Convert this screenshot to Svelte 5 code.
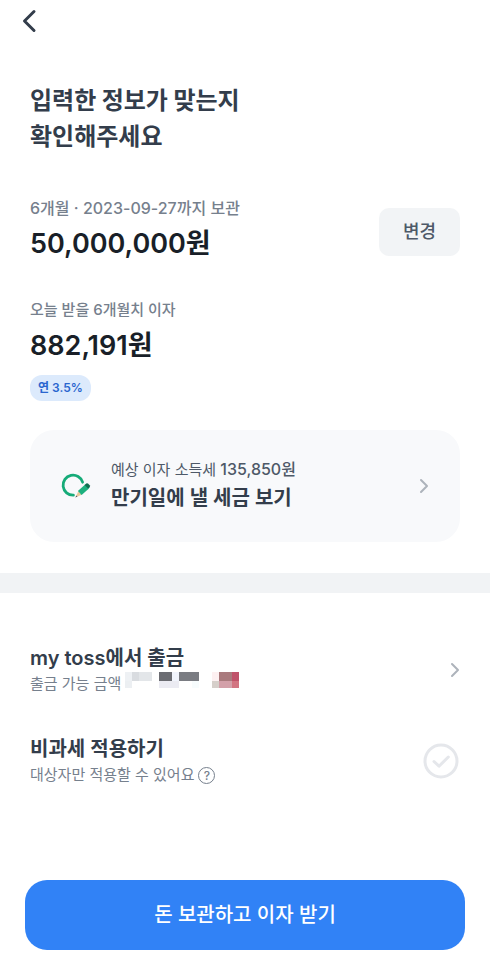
<script>
let taxFree = false;

const rate = 3.5;
const deposit = 50000000;
const interest = 882191;
const tax = 135850;

const won = (value) => value.toLocaleString('en-US') + '원';

// blurred-out balance: x, y, width, height, colour
const blocks = [
    [0, 0, 21, 27, '#eef1f4'],
    [21, 0, 21, 27, '#d9dce0'],
    [42, 0, 39, 27, '#e3e6e9'],
    [102, 0, 40, 27, '#6b6c72'],
    [142, 0, 20, 27, '#f1f4fc'],
    [162, 0, 60, 27, '#7a7c82'],
    [262, 0, 20, 27, '#fdf0f1'],
    [282, 0, 40, 27, '#a97a7d'],
    [322, 0, 20, 27, '#c0536a'],
    [0, 27, 21, 21, '#eceff2'],
    [102, 27, 60, 21, '#ebebf2'],
    [202, 27, 20, 21, '#f7fcfd'],
    [262, 27, 20, 21, '#d6cfca'],
    [282, 27, 40, 21, '#d3a0a9'],
    [322, 27, 20, 21, '#d27582']
];
</script>

<div class="page">
    <header>
        <button class="back" aria-label="뒤로">
            <svg width="16" height="24" viewBox="0 0 16 24">
                <path d="M13 2.5 3.5 12 13 21.5" />
            </svg>
        </button>
    </header>

    <main>
        <section class="summary">
            <h1>입력한 정보가 맞는지<br />확인해주세요</h1>

            <div class="amount-row">
                <div>
                    <p class="label period">6개월 · 2023-09-27까지 보관</p>
                    <p class="amount">{won(deposit)}</p>
                </div>
                <button class="change">변경</button>
            </div>

            <div class="interest">
                <p class="label">오늘 받을 6개월치 이자</p>
                <p class="amount">{won(interest)}</p>
                <span class="badge">연 {rate}%</span>
            </div>

            <a class="tax-card" href="#tax">
                <svg class="tax-icon" width="30" height="26" viewBox="0 0 30 26">
                    <path d="M12.4 22.2A10 10 0 1 1 21.6 9.2" fill="none" stroke="#16ab78" stroke-width="2.8" stroke-linecap="round" />
                    <path d="M17.2 18.4 14.4 24.4 20.6 21.7Z" fill="#e9c79b" />
                    <path d="M15.3 22.4 14.4 24.4 16.5 23.5Z" fill="#4e5968" />
                    <path d="M16.9 18 24.2 11.4 28 15.4 20.6 22Z" fill="#1db07e" />
                    <path d="M23.6 12 25.2 10.6Q26.3 9.8 27.3 10.7L28.7 12.2Q29.5 13.2 28.6 14.2L27 15.6Z" fill="#0f6e50" />
                </svg>
                <span class="tax-text">
                    <span class="tax-label">예상 이자 소득세 <b>{won(tax)}</b></span>
                    <span class="row-title tall">만기일에 낼 세금 보기</span>
                </span>
                <svg class="chevron" width="10" height="16" viewBox="0 0 10 16">
                    <path d="M2 2 8 8 2 14" />
                </svg>
            </a>
        </section>

        <section class="options">
            <a class="row" href="#account">
                <span class="row-text">
                    <span class="row-title">my toss에서 출금</span>
                    <span class="row-sub">
                        출금 가능 금액
                        <svg class="masked" width="114" height="16" viewBox="0 0 342 48" shape-rendering="crispEdges">
                            {#each blocks as [x, y, w, h, color]}
                                <rect {x} {y} width={w} height={h} fill={color} />
                            {/each}
                        </svg>
                    </span>
                </span>
                <svg class="chevron" width="10" height="16" viewBox="0 0 10 16">
                    <path d="M2 2 8 8 2 14" />
                </svg>
            </a>

            <div class="row">
                <div class="row-text">
                    <label class="row-title" for="tax-free">비과세 적용하기</label>
                    <span class="row-sub">
                        대상자만 적용할 수 있어요
                        <button class="help" aria-label="도움말">?</button>
                    </span>
                </div>
                <span class="check">
                    <input id="tax-free" type="checkbox" bind:checked={taxFree} />
                    <svg width="36" height="36" viewBox="0 0 36 36">
                        <circle cx="18" cy="18" r="16" />
                        <path d="M11 18.5 16 23.2 25.3 14" />
                    </svg>
                </span>
            </div>
        </section>
    </main>

    <footer>
        <button class="submit">돈 보관하고 이자 받기</button>
    </footer>
</div>

<style>
:global(body) {
    margin: 0;
    background: #fff;
}

.page {
    display: flex;
    flex-direction: column;
    min-height: 100vh;
    font-family: Inter, "Noto Sans CJK KR", sans-serif;
    color: #333d4b;
}

button {
    padding: 0;
    border: 0;
    background: none;
    font-family: inherit;
    cursor: pointer;
}

a {
    color: inherit;
    text-decoration: none;
}

p {
    margin: 0;
}

header {
    padding: 9px 21px;
}

.back {
    display: block;
    height: 24px;
}

.back svg {
    display: block;
}

.back path {
    fill: none;
    stroke: #333d4b;
    stroke-width: 3;
    stroke-linecap: round;
    stroke-linejoin: round;
}

.summary {
    padding: 39px 30px 31px;
    border-bottom: 20px solid #f1f3f5;
}

h1 {
    margin: 0 0 43px;
    font-family: "Noto Sans CJK KR", sans-serif;
    font-size: 24px;
    line-height: 36px;
    font-weight: 600;
}

.amount-row {
    display: flex;
    align-items: center;
    justify-content: space-between;
}

.label {
    font-size: 15px;
    line-height: 24px;
    font-weight: 500;
    color: #76808d;
}

.label.period {
    font-size: 16px;
}

.amount {
    font-size: 27px;
    line-height: 48px;
    font-weight: 600;
    color: #191f28;
}

.change {
    padding: 0 24px;
    border-radius: 10px;
    background: #f2f4f6;
    font-size: 18px;
    line-height: 48px;
    font-weight: 500;
    color: #4e5968;
}

.interest {
    margin-top: 30px;
}

.badge {
    display: block;
    width: fit-content;
    margin-top: 5px;
    padding: 0 8px;
    border-radius: 12px;
    background: #dceafc;
    font-size: 12px;
    line-height: 26px;
    font-weight: 600;
    color: #2a66cf;
}

.tax-card {
    display: flex;
    align-items: center;
    margin-top: 29px;
    padding: 28px 31px;
    border-radius: 24px;
    background: #f8f9fb;
}

.tax-text,
.row-text {
    display: flex;
    flex: 1;
    flex-direction: column;
}

.tax-text {
    margin-left: 20px;
}

.tax-label {
    font-size: 15px;
    line-height: 24px;
    color: #4e5968;
}

.tax-label b {
    font-size: 16px;
    line-height: 16px;
    font-weight: 500;
}

.row-title {
    font-size: 20px;
    line-height: 28px;
    font-weight: 600;
}

.row-title.tall {
    line-height: 32px;
}

.chevron path {
    fill: none;
    stroke: #adb3bb;
    stroke-width: 2;
    stroke-linecap: round;
    stroke-linejoin: round;
}

.options {
    display: flex;
    flex-direction: column;
    gap: 39px;
    padding: 51px 30px;
}

.row {
    display: flex;
    align-items: center;
}

.row-sub {
    display: flex;
    align-items: center;
    gap: 4px;
    font-size: 15px;
    line-height: 24px;
    color: #76808d;
}

.masked {
    align-self: flex-start;
}

.help {
    box-sizing: border-box;
    width: 17px;
    height: 17px;
    border: 1px solid #76808d;
    border-radius: 50%;
    font-size: 12px;
    line-height: 15px;
    font-weight: 500;
    color: #76808d;
}

.check {
    display: grid;
    margin-right: 1px;
}

.check input,
.check svg {
    grid-area: 1 / 1;
}

.check input {
    appearance: none;
    margin: 0;
    cursor: pointer;
}

.check svg {
    fill: none;
    stroke: #e5e7eb;
    stroke-width: 3;
    stroke-linecap: round;
    stroke-linejoin: round;
    pointer-events: none;
}

.check input:checked + svg {
    stroke: #3182f6;
}

footer {
    margin-top: auto;
    padding: 0 25px 10px;
}

.submit {
    display: block;
    width: 100%;
    border-radius: 22px;
    background: #3182f6;
    font-size: 20px;
    line-height: 70px;
    font-weight: 500;
    color: #fff;
}
</style>
